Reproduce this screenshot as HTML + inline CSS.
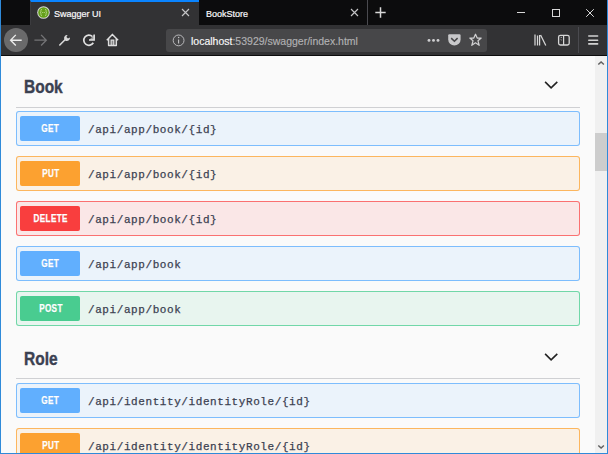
<!DOCTYPE html>
<html><head><meta charset="utf-8">
<style>
*{margin:0;padding:0;box-sizing:border-box}
html,body{width:608px;height:454px;overflow:hidden;background:#fafafa;font-family:"Liberation Sans",sans-serif}
.a{position:absolute}
#frame{position:absolute;left:0;top:0;width:608px;height:454px;border:1px solid #2f8ad9;border-top:0;z-index:50;pointer-events:none}
#tabs{left:0;top:0;width:608px;height:25px;background:#0c0c0d}
#acttab{left:30px;top:0;width:169px;height:25px;background:#323234;border-top:2px solid #0a84ff;border-left:1px solid #3c3c3f}
#toolbar{left:0;top:25px;width:608px;height:30px;background:#323234}
#tbline{left:0;top:55px;width:608px;height:1px;background:#0c0c0d}
#url{left:165.5px;top:28.5px;width:321.5px;height:23.5px;background:#474749;border-radius:3px}
.tt{font-size:9px;color:#f9f9fa;top:9px;white-space:nowrap;-webkit-text-stroke:0.2px #f9f9fa}
.urltext{left:191px;top:35px;font-size:10.5px;color:#f9f9fa;white-space:nowrap;-webkit-text-stroke:0.15px #f9f9fa}
.urltext span{color:#b1b1b3;-webkit-text-stroke:0.15px #b1b1b3}
#content{left:0;top:56px;width:595px;height:398px;background:#fafafa}
#sb{left:595px;top:56px;width:12px;height:398px;background:#f0f0f0}
#thumb{left:595px;top:133px;width:12px;height:38px;background:#cdcdcd}
.tag{left:24px;transform:scaleX(0.86);transform-origin:0 0;font-size:18px;font-weight:bold;color:#3b4151;-webkit-text-stroke:0.4px #3b4151;white-space:nowrap}
.sep{left:16px;width:564px;height:1px;background:#cfd0d3}
.op{left:16px;width:564px;height:35px;border:1px solid;border-radius:3px}
.badge{left:20px;width:60px;height:25px;border-radius:2px;color:#fff;font-weight:bold;font-size:10px;text-align:center;line-height:25px;text-shadow:0 1px 0 rgba(0,0,0,.1)}
.badge span{display:inline-block;font-size:10.3px;letter-spacing:0.45px;-webkit-text-stroke:0.25px #fff;transform:scaleX(0.79);position:relative;top:0px;left:0.5px}
.path{left:88px;font-family:"Liberation Mono",monospace;font-weight:normal;-webkit-text-stroke:0.25px #3b4151;font-size:11px;letter-spacing:0.58px;color:#3b4151;white-space:nowrap}
.get{background:#ebf3fb;border-color:rgba(97,175,254,.8)}
.put{background:#faf1e6;border-color:rgba(252,161,48,.75)}
.del{background:#fae7e7;border-color:rgba(249,62,62,.7)}
.post{background:#e8f5ef;border-color:rgba(73,204,144,.75)}
.bget{background:#61affe}.bput{background:#fca130}.bdel{background:#f93e3e}.bpost{background:#49cc90}
</style></head>
<body>
<div id="tabs" class="a"></div>
<div id="acttab" class="a"></div>
<!-- swagger favicon -->
<svg class="a" style="left:37px;top:6px" width="13" height="13" viewBox="0 0 13 13">
<circle cx="6.5" cy="6.5" r="6.3" fill="#d6d6d6"/>
<circle cx="6.5" cy="6.5" r="5.3" fill="#65a01a"/>
<path d="M5 3.3Q3.9 3.3 3.9 4.6V5.6Q3.9 6.5 3.1 6.5Q3.9 6.5 3.9 7.4V8.4Q3.9 9.7 5 9.7M8 3.3Q9.1 3.3 9.1 4.6V5.6Q9.1 6.5 9.9 6.5Q9.1 6.5 9.1 7.4V8.4Q9.1 9.7 8 9.7" stroke="#b6d88a" stroke-width="0.9" fill="none"/>
<path d="M5.2 6.5H7.8" stroke="#b6d88a" stroke-width="1" stroke-dasharray="1 0.6"/>
</svg>
<div class="a tt" style="left:54px">Swagger UI</div>
<svg class="a" style="left:181px;top:8px" width="9" height="9" viewBox="0 0 9 9"><path d="M1 1L8 8M8 1L1 8" stroke="#c4c4c6" stroke-width="1.15"/></svg>
<div class="a tt" style="left:206px">BookStore</div>
<svg class="a" style="left:350px;top:8px" width="9" height="9" viewBox="0 0 9 9"><path d="M1 1L8 8M8 1L1 8" stroke="#c4c4c6" stroke-width="1.15"/></svg>
<div class="a" style="left:367px;top:0;width:1px;height:25px;background:#4a4a4f"></div>
<svg class="a" style="left:374.5px;top:6.5px" width="11" height="11" viewBox="0 0 11 11"><path d="M5.5 0.3V10.7M0.3 5.5H10.7" stroke="#d8d8d8" stroke-width="1.5"/></svg>
<!-- window controls -->
<div class="a" style="left:517px;top:12px;width:8px;height:1px;background:#d8d8d8"></div>
<div class="a" style="left:551.5px;top:9px;width:8px;height:8px;border:1px solid #d8d8d8"></div>
<svg class="a" style="left:585px;top:8px" width="10" height="10" viewBox="0 0 10 10"><path d="M1.2 1.2L8.8 8.8M8.8 1.2L1.2 8.8" stroke="#d8d8d8" stroke-width="1"/></svg>

<div id="toolbar" class="a"></div>
<div id="tbline" class="a"></div>
<!-- back -->
<div class="a" style="left:4px;top:28px;width:24px;height:24px;border-radius:50%;background:#6a6a6b"></div>
<svg class="a" style="left:9px;top:33px" width="14" height="14" viewBox="0 0 14 14"><path d="M12.7 7.2H1.6M6.8 1.9L1.6 7.2L6.8 12.5" stroke="#ececec" stroke-width="1.35" fill="none"/></svg>
<svg class="a" style="left:34px;top:33px" width="14" height="14" viewBox="0 0 14 14"><path d="M0.4 7.2H12.3M7.1 1.9L12.3 7.2L7.1 12.5" stroke="#747476" stroke-width="1.3" fill="none"/></svg>
<!-- wrench -->
<svg class="a" style="left:58px;top:33px" width="14" height="14" viewBox="0 0 14 14"><path d="M1.8 12L7 6.8" stroke="#d8d8d8" stroke-width="1.6" stroke-linecap="round"/><path d="M6.3 6.4A3.1 3.1 0 0 1 9.6 2.1L8.4 4.1L9.9 5.6L11.9 4.4A3.1 3.1 0 0 1 7.8 7.9Z" fill="#d8d8d8"/></svg>
<!-- reload -->
<svg class="a" style="left:78px;top:30px" width="22" height="20" viewBox="0 0 22 20"><path d="M15.3 12.8A5.1 5.1 0 1 1 14.4 6.5" stroke="#e0e0e0" stroke-width="1.7" fill="none"/><path d="M16.2 4.5V10.1H11" stroke="#e0e0e0" stroke-width="1.5" fill="none"/><path d="M16 4.8V10H11.2Z" fill="rgba(224,224,224,.6)"/></svg>
<!-- home -->
<svg class="a" style="left:106px;top:33px" width="14" height="14" viewBox="0 0 14 14"><path d="M0.8 7.3L6.4 1.4L12.1 7.3M2.6 5.6V12.4H10.3V5.6" stroke="#dedede" stroke-width="1.5" fill="none" stroke-linejoin="round"/><path d="M5.1 12.4V7.2H7.8V12.4" stroke="#dedede" stroke-width="1.2" fill="rgba(222,222,222,.5)"/></svg>
<div id="url" class="a"></div>
<svg class="a" style="left:172px;top:33.5px" width="13" height="13" viewBox="0 0 13 13"><circle cx="6.6" cy="6.4" r="5.4" stroke="#bdbdbf" stroke-width="0.95" fill="none"/><path d="M6.6 5.4V9.6" stroke="#c4c4c6" stroke-width="1.1"/><circle cx="6.6" cy="3.6" r="0.75" fill="#c4c4c6"/></svg>
<div class="a urltext">localhost<span>:53929/swagger/index.html</span></div>
<svg class="a" style="left:426px;top:38px" width="15" height="5" viewBox="0 0 15 5"><circle cx="3" cy="2.4" r="1.45" fill="#cfcfd1"/><circle cx="7.5" cy="2.4" r="1.45" fill="#cfcfd1"/><circle cx="12" cy="2.4" r="1.45" fill="#cfcfd1"/></svg>
<svg class="a" style="left:448px;top:34px" width="13" height="12" viewBox="0 0 13 12"><path d="M0.2 1.4Q0.2 0.2 1.4 0.2H11.4Q12.6 0.2 12.6 1.4V5.4A6.2 6.2 0 0 1 0.2 5.4Z" fill="#c8c8ca"/><path d="M3.2 4.1L6.4 7.3L9.6 4.1" stroke="#474749" stroke-width="1.5" fill="none"/></svg>
<svg class="a" style="left:469px;top:33px" width="13" height="14" viewBox="0 0 13 14"><path d="M6.5 1.2L8.2 5.1H12.2L9 7.8L10.2 12.3L6.5 9.8L2.8 12.3L4 7.8L0.8 5.1H4.8Z" stroke="#d0d0d2" stroke-width="1.25" fill="none" stroke-linejoin="round"/></svg>
<!-- library -->
<svg class="a" style="left:530px;top:30px" width="44" height="20" viewBox="0 0 44 20"><path d="M5 4.6V15.5M7.5 5.6V15.5M9.6 5V15.5M10.6 5L15.8 15.5" stroke="#d6d6d6" stroke-width="1.25" fill="none"/>
<rect x="28.6" y="5.3" width="10.6" height="9.7" rx="1.8" stroke="#d6d6d6" stroke-width="1.3" fill="none"/><path d="M33.6 5.3V15" stroke="#d6d6d6" stroke-width="1.2"/><path d="M30.6 7.4H32M30.6 9.4L31.8 10.2" stroke="#bdbdbd" stroke-width="0.8"/></svg>
<div class="a" style="left:578px;top:27px;width:1px;height:26px;background:#4a4a4f"></div>
<svg class="a" style="left:588px;top:34px" width="11" height="12" viewBox="0 0 11 12"><path d="M0.8 2H9.6M0.8 6.2H9.6M0.8 9.9H9.6" stroke="#d2d2d2" stroke-width="1.6" stroke-linecap="round"/></svg>

<div id="content" class="a"></div>
<div id="sb" class="a"></div>
<div id="thumb" class="a"></div>
<svg class="a" style="left:597px;top:60px" width="8" height="6" viewBox="0 0 8 6"><path d="M1.3 4.6L4.1 1.9L6.9 4.6" stroke="#606060" stroke-width="1.45" fill="none"/></svg>
<svg class="a" style="left:597px;top:444px" width="8" height="6" viewBox="0 0 8 6"><path d="M1.3 1.4L4.1 4.1L6.9 1.4" stroke="#606060" stroke-width="1.45" fill="none"/></svg>

<!-- Book -->
<div class="a tag" style="top:76.6px">Book</div>
<svg class="a" style="left:544px;top:80px" width="15" height="10" viewBox="0 0 15 10"><path d="M1.1 1.9L7.1 7.8L13.3 1.9" stroke="#222" stroke-width="1.6" fill="none"/></svg>
<div class="a sep" style="top:107px"></div>

<div class="a op get" style="top:111px"></div>
<div class="a badge bget" style="top:116px"><span>GET</span></div>
<div class="a path" style="top:124px">/api/app/book/{id}</div>

<div class="a op put" style="top:156px"></div>
<div class="a badge bput" style="top:161px"><span>PUT</span></div>
<div class="a path" style="top:169px">/api/app/book/{id}</div>

<div class="a op del" style="top:201px"></div>
<div class="a badge bdel" style="top:206px"><span>DELETE</span></div>
<div class="a path" style="top:214px">/api/app/book/{id}</div>

<div class="a op get" style="top:246px"></div>
<div class="a badge bget" style="top:251px"><span>GET</span></div>
<div class="a path" style="top:259px">/api/app/book</div>

<div class="a op post" style="top:291px"></div>
<div class="a badge bpost" style="top:296px"><span>POST</span></div>
<div class="a path" style="top:304px">/api/app/book</div>

<!-- Role -->
<div class="a tag" style="top:348.6px">Role</div>
<svg class="a" style="left:544px;top:352px" width="15" height="10" viewBox="0 0 15 10"><path d="M1.1 1.9L7.1 7.8L13.3 1.9" stroke="#222" stroke-width="1.6" fill="none"/></svg>
<div class="a sep" style="top:378px"></div>

<div class="a op get" style="top:383px"></div>
<div class="a badge bget" style="top:388px"><span>GET</span></div>
<div class="a path" style="top:396px">/api/identity/identityRole/{id}</div>

<div class="a op put" style="top:428px"></div>
<div class="a badge bput" style="top:433px"><span>PUT</span></div>
<div class="a path" style="top:441px">/api/identity/identityRole/{id}</div>

<div id="frame"></div>
</body></html>
